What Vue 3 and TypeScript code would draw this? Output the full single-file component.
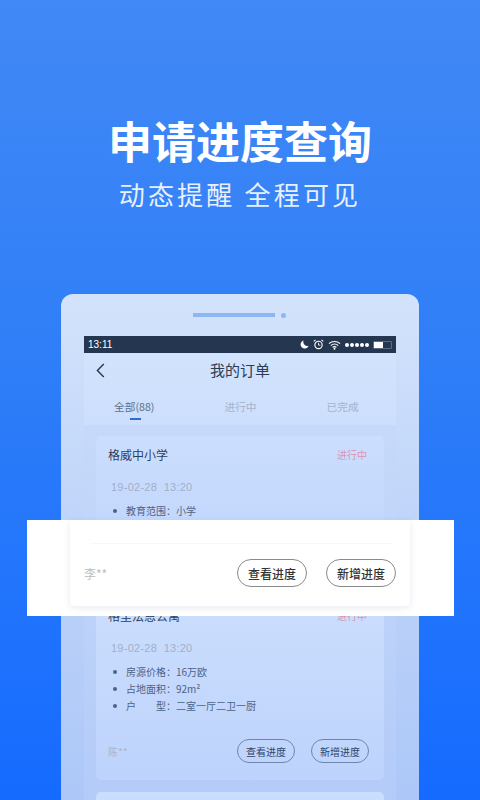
<script setup lang="ts">
interface Row { label: string; value: string }
const rows: Row[] = [
  { label: '房源价格', value: '16万欧' },
  { label: '占地面积', value: '92m²' },
  { label: '户　　型', value: '二室一厅二卫一厨' },
]
</script>

<template>
  <div class="page">
    <header class="hero">
      <h1 class="title">申请进度查询</h1>
      <p class="subtitle">动态提醒 全程可见</p>
    </header>

    <section class="tablet">
      <div class="speaker"><span class="bar"></span><span class="dot"></span></div>
      <div class="screen">
        <div class="status">
          <span class="time">13:11</span>
          <div class="status-icons">
            <svg width="9" height="9" viewBox="0 0 10 10"><path d="M4 .5a4.6 4.6 0 1 0 5.6 6A4.6 4.6 0 0 1 4 .5z" fill="#fff" /></svg>
            <svg width="11" height="11" viewBox="0 0 12 12" fill="none" stroke="#fff"><circle cx="6" cy="6.5" r="4" stroke-width="1.2" /><path d="M6 4.2v2.5h2" stroke-width=".9" /><path d="M.8 2.6 2.8 1M11.2 2.6 9.2 1" stroke-width="1.2" /></svg>
            <svg width="13" height="10" viewBox="0 0 14 10" fill="none" stroke="#fff" stroke-width="1.1"><path d="M1 3.6a8.6 8.6 0 0 1 12 0M3 5.6a5.7 5.7 0 0 1 8 0M5 7.6a2.8 2.8 0 0 1 4 0" /><circle cx="7" cy="9" r=".5" fill="#fff" /></svg>
            <span class="signal"><i v-for="n in 5" :key="n"></i></span>
            <span class="battery"><i></i></span>
          </div>
        </div>

        <div class="nav">
          <svg class="back" width="9" height="15" viewBox="0 0 9 15" fill="none"><path d="M7.8 1 1.4 7.5l6.4 6.5" stroke="#26364f" stroke-width="1.4" /></svg>
          <span class="nav-title">我的订单</span>
        </div>

        <div class="tabs">
          <span class="tab active">全部(88)</span>
          <span class="tab second">进行中</span>
          <span class="tab third">已完成</span>
        </div>

        <div class="list">
          <article class="card first">
            <div class="card-head">
              <span class="name">格威中小学</span>
              <span class="state">进行中</span>
            </div>
            <div class="date">19-02-28&nbsp;&nbsp;13:20</div>
            <ul class="rows">
              <li>教育范围：小学</li>
            </ul>
          </article>

          <article class="card">
            <div class="card-head">
              <span class="name">格里法恩公寓</span>
              <span class="state">进行中</span>
            </div>
            <div class="date">19-02-28&nbsp;&nbsp;13:20</div>
            <ul class="rows">
              <li v-for="r in rows" :key="r.label">{{ r.label }}：{{ r.value }}</li>
            </ul>
            <div class="foot">
              <span class="person">陈**</span>
              <span class="btn">查看进度</span>
              <span class="btn">新增进度</span>
            </div>
          </article>

          <article class="card last"></article>
        </div>
      </div>
    </section>

    <aside class="band">
      <div class="band-card">
        <div class="band-line"></div>
        <div class="band-foot">
          <span class="band-person">李**</span>
          <span class="band-btn">查看进度</span>
          <span class="band-btn">新增进度</span>
        </div>
      </div>
    </aside>
  </div>
</template>

<style scoped>
.page {
  position: relative;
  height: 800px;
  overflow: hidden;
  background: linear-gradient(180deg, #4189f5 0%, #2f7ef8 45%, #156bff 100%);
  font-family: "Noto Sans CJK SC", "Noto Sans", sans-serif;
}
.hero {
  padding-top: 108px;
  text-align: center;
  color: #fff;
}
.title {
  margin: 0;
  font-size: 44px;
  line-height: 64px;
  font-weight: 700;
}
.subtitle {
  margin: 2px 0 0;
  font-size: 26px;
  line-height: 40px;
  letter-spacing: 3.2px;
  color: #e6f0ff;
}
.tablet {
  margin: 80px 61px 0;
  height: 560px;
  padding: 0 23px;
  border-radius: 12px 12px 0 0;
  background: linear-gradient(180deg, #d3e3fb 0%, #bdd3f9 45%, #a9c5f8 100%);
}
.speaker {
  height: 42px;
  display: flex;
  align-items: center;
  justify-content: center;
  gap: 6px;
  padding-right: 2px;
}
.bar {
  width: 82px;
  height: 4px;
  background: #8db7f2;
}
.dot {
  width: 5px;
  height: 5px;
  border-radius: 50%;
  background: #8db7f2;
}
.screen {
  background: linear-gradient(180deg, #d3e4fd 0%, #c1d6fb 45%, #aec9f8 100%);
  height: 518px;
}
.status {
  height: 17px;
  background: #253650;
  display: flex;
  align-items: center;
  justify-content: space-between;
  padding: 0 4px;
  color: #fff;
}
.time {
  font-family: "Liberation Sans", sans-serif;
  font-size: 10px;
}
.status-icons {
  display: flex;
  align-items: center;
  gap: 4px;
}
.signal {
  display: flex;
  gap: 1px;
}
.signal i {
  width: 4px;
  height: 4px;
  border-radius: 50%;
  background: #fff;
}
.battery {
  width: 19px;
  height: 8px;
  border: 1px solid #5d6c82;
  border-radius: 1px;
  box-sizing: border-box;
  display: block;
}
.battery i {
  display: block;
  width: 9px;
  height: 6px;
  background: #fff;
}
.nav {
  height: 34px;
  padding-bottom: 2px;
  box-sizing: border-box;
  display: flex;
  align-items: center;
  justify-content: center;
  position: relative;
}
.back {
  position: absolute;
  left: 12px;
  top: 10px;
}
.nav-title {
  font-size: 15px;
  color: #2c3b54;
}
.tabs {
  height: 38px;
  display: flex;
  align-items: center;
  font-size: 10.7px;
  color: #a4b3ca;
  padding-left: 30px;
}
.tab {
  position: relative;
}
.tab.active {
  color: #5e6f89;
}
.tab.active::after {
  content: "";
  position: absolute;
  left: 16px;
  bottom: -6px;
  width: 11px;
  height: 2px;
  background: #2f6dce;
}
.tab.second {
  margin-left: 70px;
}
.tab.third {
  margin-left: 70px;
}
.list {
  background: linear-gradient(180deg, #c6d9fa 0%, #b3cbf8 100%);
  padding: 11px 12px 0;
  display: flex;
  flex-direction: column;
  gap: 12px;
  height: 378px;
  box-sizing: border-box;
}
.card {
  height: 183px;
  box-sizing: border-box;
  flex: none;
  padding: 9px 14px 0 12px;
  border-radius: 5px;
  background: linear-gradient(180deg, #cbdefe 0%, #bed3fc 100%);
}
.card.first {
  height: 149px;
}
.card.last {
  height: 60px;
}
.card-head {
  display: flex;
  justify-content: space-between;
  align-items: center;
  height: 18px;
  padding-right: 3px;
}
.name {
  font-size: 12px;
  color: #2d3e5c;
}
.state {
  font-size: 10px;
  color: #dc95b0;
}
.date {
  margin-top: 17px;
  padding-left: 3px;
  font-family: "Liberation Sans", sans-serif;
  font-size: 11px;
  letter-spacing: 0.25px;
  line-height: 14px;
  color: #9fb0ca;
}
.rows {
  list-style: none;
  margin: 8px 0 0;
  padding: 0 0 0 18px;
}
.rows li {
  position: relative;
  font-size: 10px;
  line-height: 17px;
  color: #4d6287;
}
.rows li::before {
  content: "";
  position: absolute;
  left: -13px;
  top: 7px;
  width: 4px;
  height: 4px;
  border-radius: 50%;
  background: #4d6287;
}
.foot {
  display: flex;
  align-items: center;
  margin-top: 25px;
  padding-right: 1px;
}
.person {
  font-size: 10px;
  color: #a7b6d0;
  margin-right: auto;
}
.btn {
  width: 58px;
  height: 24px;
  box-sizing: border-box;
  border: 1px solid #6c87ad;
  border-radius: 12px;
  margin-left: 16px;
  display: flex;
  align-items: center;
  justify-content: center;
  font-size: 10px;
  color: #2f4468;
}
.band {
  position: absolute;
  left: 27px;
  top: 520px;
  width: 427px;
  height: 96px;
  background: #fff;
}
.band-card {
  width: 340px;
  height: 86px;
  margin-left: 43px;
  border-radius: 0 0 4px 4px;
  box-shadow: 0 2px 6px rgba(60, 90, 150, 0.12);
  box-sizing: border-box;
  padding-top: 23px;
}
.band-line {
  height: 1px;
  margin: 0 17px 0 20px;
  background: #f8f8f8;
}
.band-foot {
  display: flex;
  align-items: center;
  margin-top: 15px;
  padding: 0 14px;
}
.band-person {
  font-size: 12px;
  color: #bcbcbc;
  margin-right: auto;
}
.band-btn {
  width: 70px;
  height: 28px;
  box-sizing: border-box;
  border: 1px solid #8a8a8a;
  border-radius: 14px;
  margin-left: 19px;
  display: flex;
  align-items: center;
  justify-content: center;
  font-size: 12px;
  font-weight: 500;
  color: #333;
}
</style>
